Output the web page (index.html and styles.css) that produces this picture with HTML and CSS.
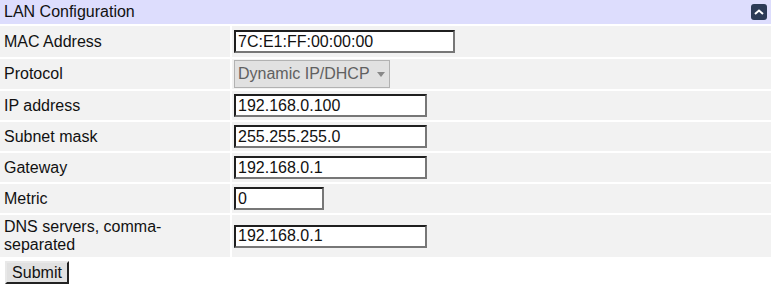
FILE: index.html
```html
<!DOCTYPE html>
<html>
<head>
<meta charset="utf-8">
<link rel="stylesheet" href="styles.css">
</head>
<body>
<div class="panel">
  <div class="panel-head">
    <span class="title">LAN Configuration</span>
    <span class="toggle"><svg width="10" height="6" viewBox="0 0 10 6"><path d="M1 5 L5 1.5 L9 5" fill="none" stroke="#fff" stroke-width="2"/></svg></span>
  </div>
  <form class="form">
    <div class="grid">
      <div class="label">MAC Address</div>
      <div class="value v-first"><input class="field w-mac" type="text" value="7C:E1:FF:00:00:00"></div>
      <div class="label">Protocol</div>
      <div class="value v-select"><span class="select">Dynamic IP/DHCP <span class="arrow"></span></span></div>
      <div class="label">IP address</div>
      <div class="value"><input class="field w-ip" type="text" value="192.168.0.100"></div>
      <div class="label">Subnet mask</div>
      <div class="value"><input class="field w-ip" type="text" value="255.255.255.0"></div>
      <div class="label">Gateway</div>
      <div class="value"><input class="field w-ip" type="text" value="192.168.0.1"></div>
      <div class="label">Metric</div>
      <div class="value"><input class="field w-metric" type="text" value="0"></div>
      <div class="label">DNS servers, comma-separated</div>
      <div class="value"><input class="field w-ip" type="text" value="192.168.0.1"></div>
    </div>
    <div class="actions"><button class="btn" type="button">Submit</button></div>
  </form>
</div>
</body>
</html>
```
FILE: styles.css
```css
html, body { margin: 0; padding: 0; background: #fff; }
body { font-family: "Liberation Sans", Arial, sans-serif; font-size: 16px; color: #111; }
.panel-head {
  display: flex; align-items: center; justify-content: space-between;
  background: #ddddfd; height: 24px; padding: 0 4px 0 4px;
}
.title { line-height: 24px; }
.toggle {
  width: 16px; height: 16px; border-radius: 3px; background: #2b3a56;
  display: flex; align-items: center; justify-content: center;
}
.grid {
  display: grid; grid-template-columns: 230px 1fr; gap: 2px; margin-top: 2px;
}
.label, .value { background: #f2f2f2; display: flex; align-items: center; }
.label { padding: 3px 4px; }
.value { padding: 3px 2px; }
.v-first { padding: 4px 2px; }
.v-select { padding: 1px 2px; }
.field {
  font-family: "Liberation Sans", Arial, sans-serif; font-size: 16px; color: #111;
  height: 23px; box-sizing: border-box; padding: 0 2px; margin: 0;
  border: 2px solid; border-color: #1f1f1f #777 #777 #1f1f1f; background: #fff;
}
.w-mac { width: 221px; }
.w-ip { width: 193px; }
.w-metric { width: 90px; }
.select {
  display: inline-flex; align-items: center; box-sizing: border-box;
  height: 28px; width: 156px; padding: 0 3px;
  background: #e1e1e1; border: 1px solid #b2b2b2; color: #606060;
}
.arrow {
  display: inline-block; margin-left: 7px; width: 0; height: 0;
  border-left: 4px solid transparent; border-right: 4px solid transparent; border-top: 5px solid #888;
}
.actions { padding: 4px 5px; }
.btn {
  font-family: "Liberation Sans", Arial, sans-serif; font-size: 16px; color: #111;
  background: #e1e1e1; height: 23px; width: 64px; padding: 0; margin: 0;
  border: 2px solid; border-color: #e8e8e8 #222 #222 #e8e8e8;
}
```
